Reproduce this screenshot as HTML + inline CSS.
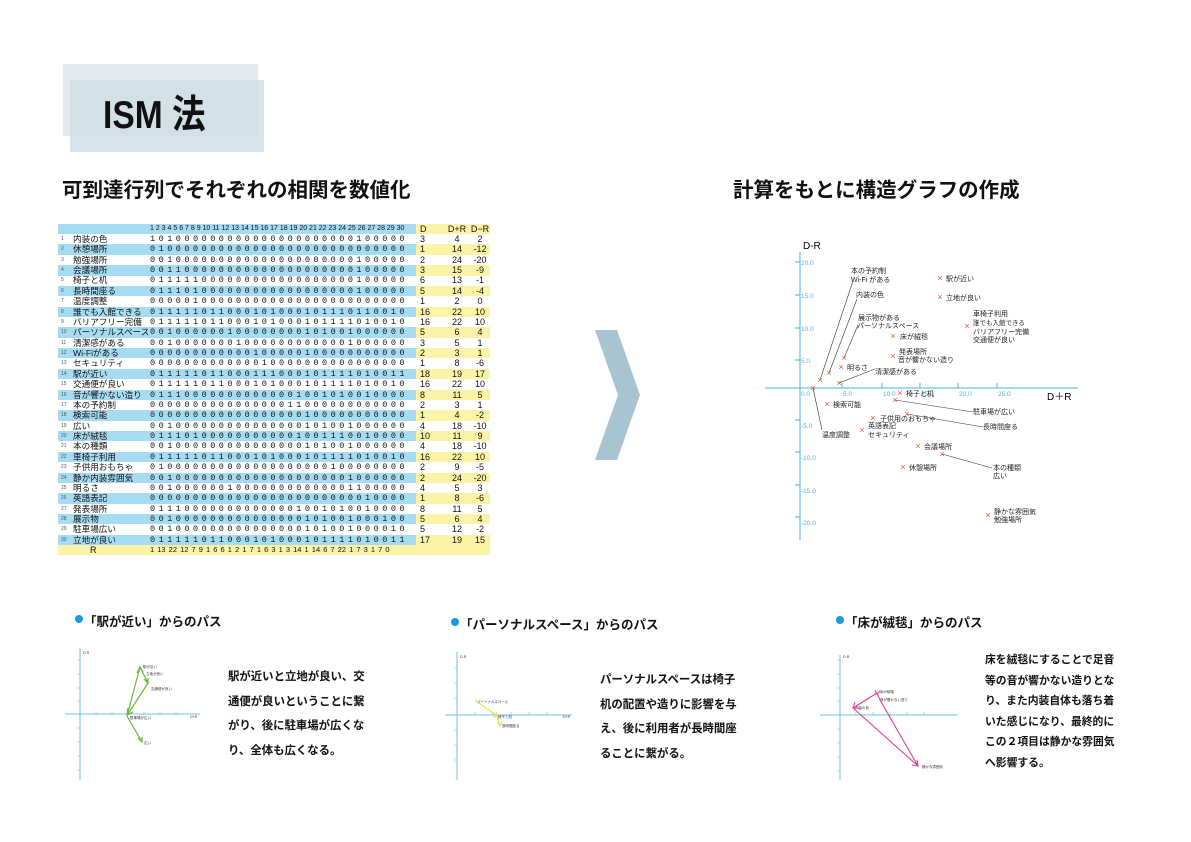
<!DOCTYPE html>
<html><head><meta charset="utf-8"><style>
body{margin:0;width:1191px;height:842px;background:#fff;position:relative;overflow:hidden;font-family:"Liberation Sans","Noto Sans CJK JP",sans-serif;color:#111}
.a{position:absolute;white-space:nowrap}
.h{font-weight:bold;font-size:20.5px}
.row{position:absolute;left:58px;width:432px;height:10.4px;font-size:9px;line-height:10.4px}
.row.b{background:linear-gradient(to right,#a6dcf2 0,#a6dcf2 358px,#fbf4a6 358px)}
.row span{position:absolute;top:0}
.n{left:3px;font-size:5px;color:#555}
.nm{left:15px;font-size:8.6px}
.m{left:92px;font-family:"Liberation Mono",monospace;letter-spacing:3.5px;font-size:8.5px}
.d{left:362px}.dr{left:389px;width:20px;text-align:center}.dm{left:412px;width:20px;text-align:center}
.t{font-weight:bold;font-size:12.5px}
.p{font-weight:bold;font-size:11.4px;line-height:24.5px}
</style></head><body>
<div class="a" style="left:63px;top:64px;width:195px;height:72px;background:#e4ebee"></div>
<div class="a" style="left:70px;top:80px;width:194px;height:72px;background:#d4e1e7;opacity:.9"></div>
<div class="a" style="left:70px;top:80px;width:188px;height:56px;background:#d3e0e6"></div>
<div class="a" style="left:103px;top:84px;font-size:39px;font-weight:bold;transform:scaleX(.86);transform-origin:left">ISM 法</div>
<div class="a h" style="left:62px;top:173px">可到達行列でそれぞれの相関を数値化</div>
<div class="a h" style="left:733px;top:173px">計算をもとに構造グラフの作成</div>

<div class="row b" style="top:224px"><span style="left:92px;font-size:7px">1 2 3 4 5 6 7 8 9 10 11 12 13 14 15 16 17 18 19 20 21 22 23 24 25 26 27 28 29 30</span><span class="d">D</span><span class="dr">D+R</span><span class="dm">D−R</span></div>
<div id="rows"></div>
<div class="row" style="top:545px;background:#fbf4a6"><span style="left:32px">R</span><span style="left:92px;font-size:7.5px;word-spacing:1px">1 13 22 12 7 9 1 6 6 1 2 1 7 1 6 3 1 3 14 1 14 6 7 22 1 7 3 1 7 0</span></div>
<script>
var r=[["内装の色","101000000000000000000000100000","3","4","2"],["休憩場所","010000000000000000000000000000","1","14","-12"],["勉強場所","001000000000000000000000100000","2","24","-20"],["会議場所","001100000000000000000000100000","3","15","-9"],["椅子と机","011111000000000000000000100000","6","13","-1"],["長時間座る","011101000000000000000000100000","5","14","-4"],["温度調整","000001000000000000000000000000","1","2","0"],["誰でも入館できる","011111011000101000101110110010","16","22","10"],["バリアフリー完備","011111011000101000101111010010","16","22","10"],["パーソナルスペース","001000000100000000101001000000","5","6","4"],["清潔感がある","001000000010000000000001000000","3","5","1"],["Wi-Fiがある","000000000000100000100000000000","2","3","1"],["セキュリティ","000000000000010000000000000000","1","8","-6"],["駅が近い","011111011000111000101111010011","18","19","17"],["交通便が良い","011111011000101000101111010010","16","22","10"],["音が響かない造り","011100000000000001001010010000","8","11","5"],["本の予約制","000000000000000011000000000000","2","3","1"],["検索可能","000000000000000000100000000000","1","4","-2"],["広い","001000000000000000101001000000","4","18","-10"],["床が絨毯","011101000000000001001110010000","10","11","9"],["本の種類","001000000000000000101001000000","4","18","-10"],["車椅子利用","011111011000101000101111010010","16","22","10"],["子供用おもちゃ","010000000000000000000100000000","2","9","-5"],["静か内装雰囲気","001000000000000000000001000000","2","24","-20"],["明るさ","001000000100000000000001100000","4","5","3"],["英語表記","000000000000000000000000010000","1","8","-6"],["発表場所","011100000000000001001010010000","8","11","5"],["展示物","001000000000000000101001000100","5","6","4"],["駐車場広い","001000000000000000101001000010","5","12","-2"],["立地が良い","011111011000101000101111010011","17","19","15"]];
var h="";r.forEach(function(x,i){h+='<div class="row'+(i%2?' b':'')+'" style="top:'+(234+i*10.37)+'px"><span class="n">'+(i+1)+'</span><span class="nm">'+x[0]+'</span><span class="m">'+x[1]+'</span><span class="d">'+x[2]+'</span><span class="dr">'+x[3]+'</span><span class="dm">'+x[4]+'</span></div>'});document.getElementById("rows").innerHTML=h;
</script>

<svg class="a" style="left:0;top:0" width="1191" height="842" font-family="Liberation Sans,Noto Sans CJK JP,sans-serif">
<polygon points="595,330 617,330 640,395 617,460 595,460 618,395" fill="#a9c4d1"/>
<g stroke="#48b3e0" stroke-width="1" fill="none">
<line x1="800" y1="252" x2="800" y2="540"/><line x1="765" y1="388" x2="1078" y2="388"/>
<line x1="795" y1="262" x2="800" y2="262"/><line x1="795" y1="295" x2="800" y2="295"/><line x1="795" y1="328" x2="800" y2="328"/><line x1="795" y1="360" x2="800" y2="360"/><line x1="795" y1="420" x2="800" y2="420"/><line x1="795" y1="452" x2="800" y2="452"/><line x1="795" y1="485" x2="800" y2="485"/><line x1="795" y1="517" x2="800" y2="517"/>
<line x1="842" y1="383" x2="842" y2="388"/><line x1="882" y1="383" x2="882" y2="388"/><line x1="920" y1="383" x2="920" y2="388"/><line x1="958" y1="383" x2="958" y2="388"/><line x1="997" y1="383" x2="997" y2="388"/>
</g>
<g fill="#48b3e0" font-size="6.5"><text x="801" y="265">20.0</text><text x="801" y="298">15.0</text><text x="801" y="331">10.0</text><text x="801" y="363">5.0</text><text x="801" y="396">0.0</text><text x="843" y="396">5.0</text><text x="883" y="396">10.0</text><text x="921" y="396">15.0</text><text x="959" y="396">20.0</text><text x="998" y="396">25.0</text><text x="801" y="428">-5.0</text><text x="801" y="460">-10.0</text><text x="801" y="493">-15.0</text><text x="801" y="525">-20.0</text></g>
<text x="803" y="249" font-size="10">D-R</text><text x="1047" y="400" font-size="10">D＋R</text>
<g stroke="#333" stroke-width=".6"><line x1="820" y1="380" x2="853" y2="281"/><line x1="829" y1="373" x2="857" y2="299"/><line x1="844" y1="358" x2="858" y2="325"/><line x1="839" y1="383" x2="875" y2="369"/><line x1="813" y1="388" x2="822" y2="430"/><line x1="895" y1="400" x2="973" y2="412"/><line x1="907" y1="414" x2="983" y2="427"/><line x1="942" y1="454" x2="992" y2="468"/></g>
<g fill="#e35b2a" font-size="9" text-anchor="middle" dominant-baseline="central">
<text x="940" y="278">×</text><text x="940" y="297">×</text><text x="967" y="326">×</text><text x="893" y="336">×</text><text x="893" y="356">×</text><text x="841" y="367">×</text><text x="844" y="358">×</text><text x="839" y="383">×</text><text x="829" y="373">×</text><text x="820" y="380">×</text><text x="813" y="388">×</text><text x="900" y="393">×</text><text x="895" y="400">×</text><text x="827" y="404">×</text><text x="873" y="418">×</text><text x="907" y="414">×</text><text x="862" y="430">×</text><text x="918" y="446">×</text><text x="942" y="454">×</text><text x="903" y="467">×</text><text x="988" y="515">×</text></g>
<g font-size="7" fill="#222">
<text x="851" y="273">本の予約制</text><text x="851" y="282">Wi-Fi がある</text><text x="856" y="297">内装の色</text><text x="858" y="320">展示物がある</text><text x="857" y="328">パーソナルスペース</text><text x="900" y="339">床が絨毯</text><text x="899" y="354">発表場所</text><text x="898" y="362">音が響かない造り</text><text x="847" y="370">明るさ</text><text x="875" y="374">清潔感がある</text><text x="946" y="281">駅が近い</text><text x="946" y="300">立地が良い</text><text x="973" y="316">車椅子利用</text><text x="973" y="325" font-size="6.5">誰でも入館できる</text><text x="973" y="334">バリアフリー完備</text><text x="973" y="342">交通便が良い</text><text x="906" y="396">椅子と机</text><text x="973" y="414">駐車場が広い</text><text x="983" y="429">長時間座る</text><text x="833" y="407">検索可能</text><text x="880" y="421">子供用のおもちゃ</text><text x="868" y="428">英語表記</text><text x="868" y="437">セキュリティ</text><text x="822" y="437">温度調整</text><text x="924" y="449">会議場所</text><text x="909" y="470">休憩場所</text><text x="993" y="470">本の種類</text><text x="993" y="478">広い</text><text x="994" y="514">静かな雰囲気</text><text x="994" y="522">勉強場所</text></g>

<g stroke="#6cc4e8" stroke-width="1"><line x1="80" y1="648" x2="80" y2="780"/><line x1="65" y1="714" x2="200" y2="714"/><line x1="457" y1="652" x2="457" y2="780"/><line x1="445" y1="715" x2="572" y2="715"/><line x1="840" y1="655" x2="840" y2="780"/><line x1="820" y1="715" x2="958" y2="715"/></g>
<g stroke="#6cc4e8" stroke-width=".6">
<path d="M77 660h3M77 674h3M77 688h3M77 701h3M77 728h3M77 742h3M77 756h3M77 770h3M96 714v-3M112 714v-3M128 714v-3M144 714v-3M160 714v-3M176 714v-3"/>
<path d="M454 668h3M454 683h3M454 698h3M454 730h3M454 745h3M454 760h3M475 715v-3M493 715v-3M511 715v-3M529 715v-3M547 715v-3"/>
<path d="M837 660h3M837 674h3M837 688h3M837 701h3M837 729h3M837 743h3M837 757h3M837 771h3M856 715v-3M873 715v-3M890 715v-3M907 715v-3M924 715v-3"/></g>
<g stroke="#6ab83a" stroke-width="1.2" fill="none"><path d="M127 716L140 667M140 667L148 683M148 683L128 714M127 716L142 742"/><path d="M137 673l3-6 3 5M144 679l4 4 0-5M138 738l4 4 0-5M128 708l-1 7 6-3"/></g>
<g font-size="3.5" fill="#333"><text x="143" y="668">駅が近い</text><text x="146" y="675">立地が良い</text><text x="151" y="690">交通便が良い</text><text x="130" y="719">駐車場が広い</text><text x="144" y="744">広い</text><text x="83" y="654">D-R</text><text x="190" y="718">D+R</text>
<text x="477" y="703">パーソナルスペース</text><text x="498" y="718">椅子と机</text><text x="502" y="727">長時間座る</text><text x="460" y="658">D-R</text><text x="563" y="718">D+R</text>
<text x="880" y="693">床が絨毯</text><text x="880" y="701">音が響かない造り</text><text x="855" y="709">内装の色</text><text x="922" y="768">静かな雰囲気</text><text x="843" y="658">D-R</text></g>
<g stroke="#e6e060" stroke-width="1.3" fill="none"><path d="M475 700L497 716L500 726M493 717l4-1-1-4M497 722l3 4 2-4"/></g>
<g stroke="#e0409a" stroke-width="1.1" fill="none"><path d="M877 693L853 708L918 766L880 700Z"/><path d="M855 702l-2 6 6 0M912 765l6 1-1-6M875 690l2 4 3-3"/></g>
<circle cx="79" cy="619" r="4" fill="#1a9be0"/><circle cx="455" cy="622" r="4" fill="#1a9be0"/><circle cx="840" cy="620" r="4" fill="#1a9be0"/>
</svg>
<div class="a t" style="left:84px;top:611px">「駅が近い」からのパス</div>
<div class="a t" style="left:460px;top:614px">「パーソナルスペース」からのパス</div>
<div class="a t" style="left:845px;top:612px">「床が絨毯」からのパス</div>
<div class="a p" style="left:228px;top:665px">駅が近いと立地が良い、交<br>通便が良いということに繋<br>がり、後に駐車場が広くな<br>り、全体も広くなる。</div>
<div class="a p" style="left:600px;top:668px">パーソナルスペースは椅子<br>机の配置や造りに影響を与<br>え、後に利用者が長時間座<br>ることに繋がる。</div>
<div class="a p" style="left:985px;top:650px;line-height:20.5px;font-size:10.8px">床を絨毯にすることで足音<br>等の音が響かない造りとな<br>り、また内装自体も落ち着<br>いた感じになり、最終的に<br>この２項目は静かな雰囲気<br>へ影響する。</div>
</body></html>
